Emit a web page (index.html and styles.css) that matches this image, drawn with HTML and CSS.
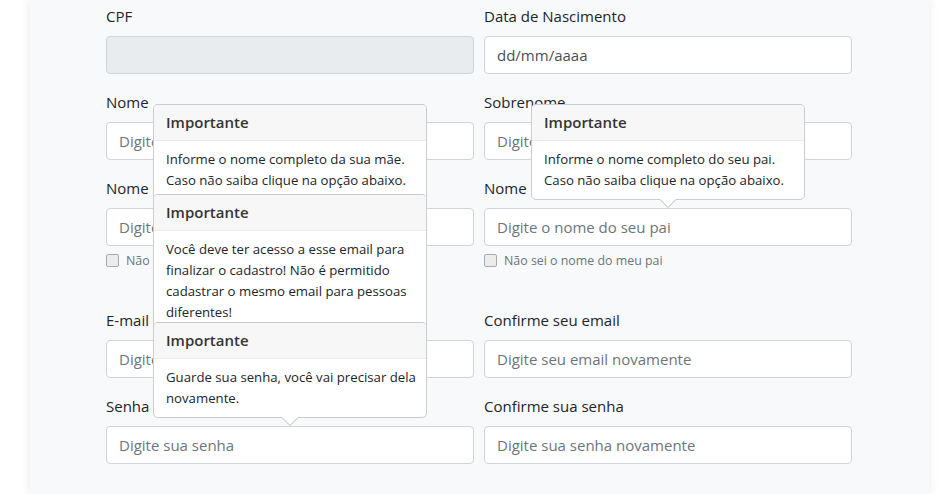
FILE: index.html
```html
<!DOCTYPE html>
<html lang="pt-BR">
<head>
<meta charset="utf-8">
<title>Cadastro</title>
<link rel="stylesheet" href="styles.css">
</head>
<body>
<main class="sheet">
  <form class="form">
    <div class="row">
      <div class="group">
        <label class="label">CPF</label>
        <div class="field"><input class="input" type="text" disabled></div>
      </div>
      <div class="group">
        <label class="label">Data de Nascimento</label>
        <div class="field"><input class="input input-date" type="text" placeholder="dd/mm/aaaa"></div>
      </div>
    </div>

    <div class="row">
      <div class="group">
        <label class="label">Nome</label>
        <div class="field"><input class="input" type="text" placeholder="Digite seu nome"></div>
      </div>
      <div class="group">
        <label class="label">Sobrenome</label>
        <div class="field"><input class="input" type="text" placeholder="Digite seu sobrenome"></div>
      </div>
    </div>

    <div class="row">
      <div class="group group-check">
        <label class="label">Nome da mãe</label>
        <div class="field">
          <input class="input" type="text" placeholder="Digite o nome da sua mãe">
          <div class="popover">
            <div class="popover-header">Importante</div>
            <div class="popover-body">Informe o nome completo da sua mãe. Caso não saiba clique na opção abaixo.</div>
            <span class="arrow"></span>
          </div>
        </div>
        <label class="check"><input class="check-box" type="checkbox"><span>Não sei o nome da minha mãe</span></label>
      </div>
      <div class="group group-check">
        <label class="label">Nome do pai</label>
        <div class="field">
          <input class="input" type="text" placeholder="Digite o nome do seu pai">
          <div class="popover">
            <div class="popover-header">Importante</div>
            <div class="popover-body">Informe o nome completo do seu pai. Caso não saiba clique na opção abaixo.</div>
            <span class="arrow"></span>
          </div>
        </div>
        <label class="check"><input class="check-box" type="checkbox"><span>Não sei o nome do meu pai</span></label>
      </div>
    </div>

    <div class="row">
      <div class="group">
        <label class="label">E-mail</label>
        <div class="field">
          <input class="input" type="email" placeholder="Digite seu email">
          <div class="popover">
            <div class="popover-header">Importante</div>
            <div class="popover-body">Você deve ter acesso a esse email para finalizar o cadastro! Não é permitido cadastrar o mesmo email para pessoas diferentes!</div>
            <span class="arrow"></span>
          </div>
        </div>
      </div>
      <div class="group">
        <label class="label">Confirme seu email</label>
        <div class="field"><input class="input" type="email" placeholder="Digite seu email novamente"></div>
      </div>
    </div>

    <div class="row">
      <div class="group">
        <label class="label">Senha</label>
        <div class="field">
          <input class="input" type="password" placeholder="Digite sua senha">
          <div class="popover">
            <div class="popover-header">Importante</div>
            <div class="popover-body">Guarde sua senha, você vai precisar dela novamente.</div>
            <span class="arrow"></span>
          </div>
        </div>
      </div>
      <div class="group">
        <label class="label">Confirme sua senha</label>
        <div class="field"><input class="input" type="password" placeholder="Digite sua senha novamente"></div>
      </div>
    </div>
  </form>
</main>
</body>
</html>
```

FILE: styles.css
```css
* { box-sizing: border-box; }

html, body {
  margin: 0;
  height: 100%;
  background: #ffffff;
}

body {
  font-family: "Open Sans", "Noto Sans", sans-serif;
  color: #212529;
  overflow: hidden;
}

.sheet {
  margin-left: 30px;
  width: 899px;
  min-height: 100%;
  background: #f8f9fa;
  box-shadow: 0 0 10px rgba(0, 0, 0, 0.09);
  padding: 4px 77px 0 76px;
}

.row {
  display: grid;
  grid-template-columns: 1fr 1fr;
  column-gap: 10px;
}

.group {
  margin-bottom: 16px;
}

.group-check {
  margin-bottom: 38px;
}

.label {
  display: block;
  font-size: 15px;
  line-height: 24px;
  margin-bottom: 8px;
  color: #212529;
}

.field {
  position: relative;
}

.input {
  display: block;
  width: 100%;
  height: 38px;
  padding: 6px 12px;
  font-family: inherit;
  font-size: 15px;
  line-height: 24px;
  color: #495057;
  background: #ffffff;
  border: 1px solid #ced4da;
  border-radius: 4px;
  outline: none;
}

.input::placeholder {
  color: #6c757d;
  opacity: 1;
}

.input:disabled {
  background: #e9ecef;
}

.input-date::placeholder {
  color: #495057;
}

.check {
  display: flex;
  align-items: center;
  gap: 7px;
  margin-top: 4px;
  height: 20px;
  font-size: 12.4px;
  color: #6c757d;
}

.check-box {
  appearance: none;
  -webkit-appearance: none;
  margin: 0;
  width: 13px;
  height: 13px;
  border: 1px solid #a9a9a9;
  border-radius: 2px;
  background: #ececec;
}

.popover {
  position: absolute;
  z-index: 10;
  left: 50%;
  bottom: calc(100% + 8px);
  transform: translateX(-50%);
  width: 274px;
  background: #ffffff;
  border: 1px solid rgba(0, 0, 0, 0.2);
  border-radius: 5px;
  font-size: 13.2px;
  line-height: 21px;
  color: #212529;
}

.popover-header {
  padding: 8px 12px;
  font-size: 15px;
  font-weight: 600;
  line-height: 19.2px;
  color: #343434;
  background: #f7f7f7;
  border-bottom: 1px solid #ebebeb;
  border-radius: 4px 4px 0 0;
}

.popover-body {
  padding: 8px 8px 8px 12px;
}

.arrow {
  position: absolute;
  left: 50%;
  bottom: -9px;
  margin-left: -8px;
  width: 16px;
  height: 8px;
}

.arrow::before,
.arrow::after {
  content: "";
  position: absolute;
  left: 0;
  border-style: solid;
  border-width: 8px 8px 0;
  border-color: transparent;
}

.arrow::before {
  top: 0;
  border-top-color: rgba(0, 0, 0, 0.25);
}

.arrow::after {
  top: -1px;
  border-top-color: #ffffff;
}
```
